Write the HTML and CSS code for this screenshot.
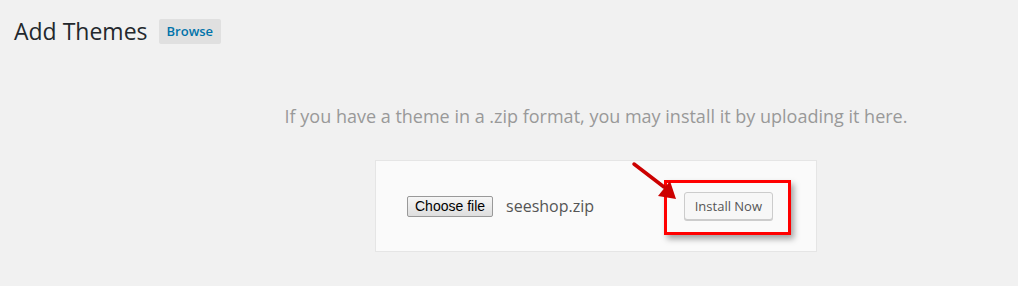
FILE: index.html
```html
<!DOCTYPE html>
<html lang="en">
<head>
  <meta charset="UTF-8">
  <title>Add Themes</title>
  <link rel="stylesheet" href="styles.css">
</head>
<body>
  <div class="wrap">
    <h1 class="page-title">Add Themes <a class="title-action" href="#">Browse</a></h1>

    <!-- upload area -->
    <div class="upload-theme">
      <p class="install-help">If you have a theme in a .zip format, you may install it by uploading it here.</p>
      <form class="upload-form">
        <span class="file-pick">
          <button type="button" class="file-button">Choose file</button>
          <span class="file-name">seeshop.zip</span>
        </span>
        <span class="install-wrap">
          <button type="button" class="install-button">Install Now</button>
          <span class="highlight"></span>
          <svg class="arrow" width="60" height="50" viewBox="0 0 60 50">
            <line x1="4" y1="4" x2="34" y2="27" stroke="#cc0000" stroke-width="3.5" stroke-linecap="round"/>
            <polygon points="46,39 28,36 40,21" fill="#cc0000"/>
          </svg>
        </span>
      </form>
    </div>
  </div>
</body>
</html>
```

FILE: styles.css
```css
body {
  margin: 0;
  background: #f1f1f1;
  font-family: "Open Sans", sans-serif;
  color: #444;
}

.wrap {
  padding: 0 14px;
}

.page-title {
  margin: 0;
  padding: 17px 0 0;
  font-size: 23px;
  font-weight: 400;
  line-height: 29px;
  color: #23282d;
  display: flex;
  align-items: center;
  gap: 11px;
}

.title-action {
  font-size: 13px;
  font-weight: 600;
  line-height: 25px;
  padding: 0 8px;
  border-radius: 2px;
  background: #e0e0e0;
  color: #0073aa;
  text-decoration: none;
}

.upload-theme {
  padding-left: 174px;
  display: flex;
  flex-direction: column;
  align-items: center;
}

.install-help {
  margin: 58px 0 32px;
  font-size: 18px;
  color: #999;
}

.upload-form {
  width: 442px;
  height: 92px;
  background: #fafafa;
  border: 1px solid #e5e5e5;
  display: flex;
  align-items: center;
  justify-content: space-between;
  padding: 0 0 0 31px;
  box-sizing: border-box;
}

.file-pick {
  display: flex;
  align-items: center;
  gap: 13px;
}

.file-button {
  font-family: "Liberation Sans", Arial, sans-serif;
  font-size: 14px;
  padding: 1px 7px;
  height: 21px;
  border: 1px solid #999;
  border-radius: 2px;
  background: linear-gradient(#f6f6f6, #dedede);
  color: #000;
}

.file-name {
  font-size: 16px;
  color: #555;
}

.install-wrap {
  position: relative;
  margin-right: 43px;
  margin-top: -1px;
}

.install-button {
  display: block;
  font-family: "Open Sans", sans-serif;
  font-size: 13px;
  height: 28px;
  padding: 0 10px;
  border: 1px solid #ccc;
  border-radius: 3px;
  background: #f7f7f7;
  color: #555;
  box-shadow: 0 1px 0 #ccc;
}

.highlight {
  position: absolute;
  left: -20px;
  top: -12px;
  width: 127px;
  height: 55px;
  box-sizing: border-box;
  border: 3px solid #ff0000;
  box-shadow: 3px 4px 6px rgba(0, 0, 0, 0.35);
}

.arrow {
  position: absolute;
  left: -54px;
  top: -32px;
}
```
